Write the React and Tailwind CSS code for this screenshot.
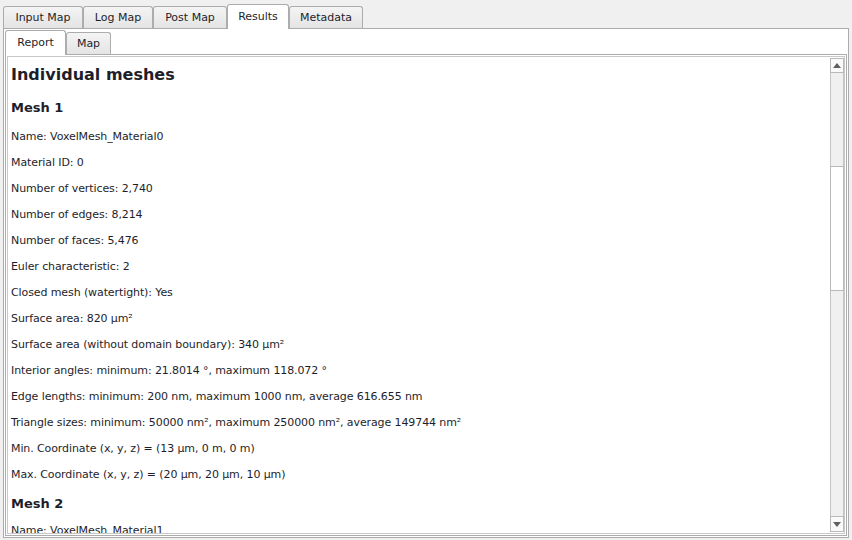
import React from 'react';

const outerTabs = [
    { label: 'Input Map', w: 'w-[80px]' },
    { label: 'Log Map', w: 'w-[70px]' },
    { label: 'Post Map', w: 'w-[74px]' },
    { label: 'Results', w: 'w-[62px]', active: true },
    { label: 'Metadata', w: 'w-[74px]' },
];

const lines = [
    'Name: VoxelMesh_Material0',
    'Material ID: 0',
    'Number of vertices: 2,740',
    'Number of edges: 8,214',
    'Number of faces: 5,476',
    'Euler characteristic: 2',
    'Closed mesh (watertight): Yes',
    'Surface area: 820 µm²',
    'Surface area (without domain boundary): 340 µm²',
    'Interior angles: minimum: 21.8014 °, maximum 118.072 °',
    'Edge lengths: minimum: 200 nm, maximum 1000 nm, average 616.655 nm',
    'Triangle sizes: minimum: 50000 nm², maximum 250000 nm², average 149744 nm²',
    'Min. Coordinate (x, y, z) = (13 µm, 0 m, 0 m)',
    'Max. Coordinate (x, y, z) = (20 µm, 20 µm, 10 µm)',
];

const Tab = ({ label, w, active }) => (
    <div
        className={`${w} flex items-center justify-center border border-[#acacac] rounded-t-[3px] ${
            active
                ? 'h-[25px] bg-white border-b-0 -mb-px relative z-10'
                : 'h-[22px] pt-[2px] border-b-0 bg-gradient-to-b from-[#f4f4f4] to-[#e4e4e4]'
        }`}
    >
        <span>{label}</span>
    </div>
);

const Scrollbar = () => (
    <div className="w-[14px] flex flex-col my-px">
        <div className="h-[15px] border border-[#b9b9b9] bg-[#fafafa] flex items-center justify-center">
            <svg width="8" height="5" viewBox="0 0 8 5"><path d="M0 5 L4 0 L8 5 Z" fill="#606060" /></svg>
        </div>
        <div className="h-[93px] border-x border-[#c4c4c4] bg-[#f0f0f0]" />
        <div className="h-[125px] border border-[#b9b9b9] bg-white" />
        <div className="flex-1 border-x border-[#c4c4c4] bg-[#f0f0f0]" />
        <div className="h-[16px] border border-[#b9b9b9] bg-[#fafafa] flex items-center justify-center">
            <svg width="8" height="5" viewBox="0 0 8 5"><path d="M0 0 L4 5 L8 0 Z" fill="#606060" /></svg>
        </div>
    </div>
);

export default function App() {
    return (
        <div className="w-[852px] h-[540px] bg-[#f0f0f0] text-[11px] text-[#1e1e2a] font-['DejaVu_Sans',sans-serif] overflow-hidden">
            {/* top tab bar */}
            <div className="flex items-end h-[28px] pl-[3px]">
                {outerTabs.map((t) => (
                    <Tab key={t.label} {...t} />
                ))}
            </div>

            <div className="mx-[3px] h-[510px] border border-[#acacac] bg-white flex flex-col">
                {/* inner tab bar */}
                <div className="flex items-end h-[25px] pl-px">
                    <Tab label="Report" w="w-[61px]" active />
                    <Tab label="Map" w="w-[45px]" />
                </div>

                <div className="flex-1 mx-px mb-px border border-[#acacac] p-px min-h-0">
                    <div className="h-full border border-[#c8c8c8] flex min-h-0">
                        <div className="flex-1 pl-[3px] overflow-hidden tracking-[-0.1px]">
                            <div className="h-[36px] leading-[36px] text-[16px] font-bold tracking-normal">Individual meshes</div>
                            <div className="h-[31px] leading-[29px] text-[13px] font-bold tracking-normal">Mesh 1</div>
                            {lines.map((l) => (
                                <div key={l} className="h-[26px] leading-[26px] whitespace-nowrap">{l}</div>
                            ))}
                            <div className="h-[30px] leading-[32px] text-[13px] font-bold tracking-normal">Mesh 2</div>
                            <div className="h-[26px] leading-[26px] whitespace-nowrap">Name: VoxelMesh_Material1</div>
                        </div>
                        <Scrollbar />
                    </div>
                </div>
            </div>
        </div>
    );
}
